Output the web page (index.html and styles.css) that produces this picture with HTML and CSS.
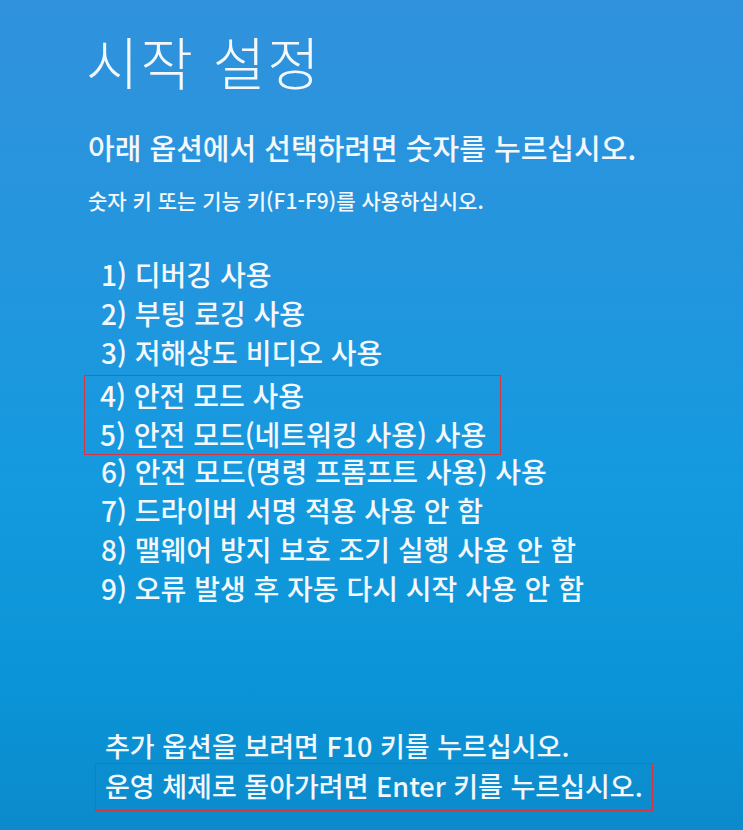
FILE: index.html
```html
<!DOCTYPE html>
<html lang="ko">
<head>
<meta charset="utf-8">
<title>시작 설정</title>
<link rel="stylesheet" href="styles.css">
</head>
<body>
<main class="screen">
  <h1 class="title">시작 설정</h1>
  <p class="lead">아래 옵션에서 선택하려면 숫자를 누르십시오.</p>
  <p class="hint">숫자 키 또는 기능 키(F1-F9)를 사용하십시오.</p>
  <ol class="options">
    <li class="opt">1) 디버깅 사용</li>
    <li class="opt">2) 부팅 로깅 사용</li>
    <li class="opt">3) 저해상도 비디오 사용</li>
    <li class="mark mark-list">
      <div class="opt">4) 안전 모드 사용</div>
      <div class="opt">5) 안전 모드(네트워킹 사용) 사용</div>
    </li>
    <li class="opt">6) 안전 모드(명령 프롬프트 사용) 사용</li>
    <li class="opt">7) 드라이버 서명 적용 사용 안 함</li>
    <li class="opt">8) 맬웨어 방지 보호 조기 실행 사용 안 함</li>
    <li class="opt">9) 오류 발생 후 자동 다시 시작 사용 안 함</li>
  </ol>
  <div class="footer">
    <p class="foot">추가 옵션을 보려면 F10 키를 누르십시오.</p>
    <p class="foot mark mark-foot">운영 체제로 돌아가려면 Enter 키를 누르십시오.</p>
  </div>
</main>
</body>
</html>
```

FILE: styles.css
```css
html, body {
  margin: 0;
  padding: 0;
  height: 100%;
}
body {
  background: linear-gradient(180deg, #3192dc 0%, #2196de 35%, #139ade 60%, #0a93d6 85%, #0c8acb 100%);
  color: #f4f8fc;
  font-family: "Noto Sans CJK KR", "Noto Sans", sans-serif;
  overflow: hidden;
}
.screen {
  display: flex;
  flex-direction: column;
  padding: 28px 0 0 86px;
  height: 830px;
  box-sizing: border-box;
}
.title {
  margin: 0;
  font-size: 57px;
  font-weight: 300;
  line-height: 64px;
  letter-spacing: 2px;
}
.lead {
  margin: 37px 0 0 2px;
  font-size: 29px;
  line-height: 36px;
  font-weight: 500;
}
.hint {
  margin: 22px 0 0 2px;
  font-size: 21px;
  line-height: 26px;
  font-weight: 500;
}
.options {
  list-style: none;
  margin: 42px 0 0 0;
  padding: 0 0 0 15px;
  display: flex;
  flex-direction: column;
}
.opt {
  font-size: 28px;
  line-height: 39px;
  font-weight: 500;
  white-space: nowrap;
}
.mark {
  border: 1.5px solid #d8343f;
}
.mark-list {
  margin-left: -17px;
  padding-left: 15px;
  width: 400px;
  margin-top: 3px;
  margin-bottom: -3px;
}
.footer {
  margin-top: auto;
  margin-bottom: 19px;
  display: flex;
  flex-direction: column;
  padding-left: 19px;
}
.foot {
  margin: 0;
  font-size: 27px;
  line-height: 34px;
  font-weight: 500;
  white-space: nowrap;
}
.mark-foot {
  margin-left: -10px;
  padding: 5px 10px 7px 9px;
  width: 537px;
}
```
